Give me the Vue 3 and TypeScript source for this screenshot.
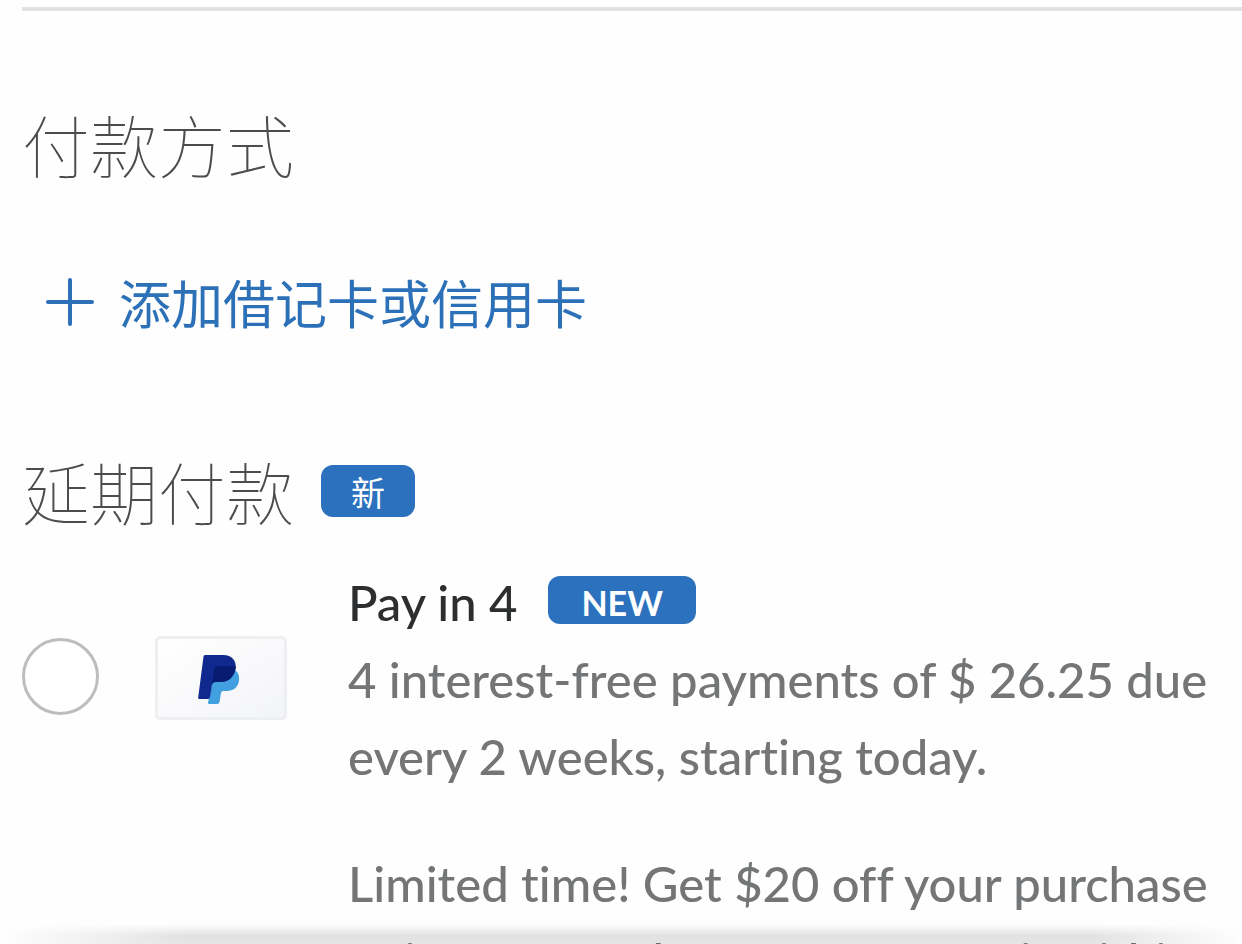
<script setup lang="ts">
import { ref } from 'vue'

const selected = ref<string>('')
</script>

<template>
  <main class="page">
    <hr class="rule" />

    <section class="methods">
      <h2 class="title">付款方式</h2>
      <button type="button" class="add">
        <svg class="plus" viewBox="0 0 48 48" aria-hidden="true">
          <path d="M24 2V46M2 24H46" />
        </svg>
        <span>添加借记卡或信用卡</span>
      </button>
    </section>

    <section class="later">
      <div class="heading">
        <h2 class="title">延期付款</h2>
        <span class="badge badge-cn">新</span>
      </div>

      <div class="option">
        <input id="pay-in-4" v-model="selected" class="radio" type="radio" name="funding" value="pay-in-4" />
        <svg class="card" viewBox="0 0 132 84" aria-hidden="true">
          <defs>
            <linearGradient id="cardFill" x1="0" y1="0" x2="1" y2="1">
              <stop offset="0" stop-color="#ffffff" />
              <stop offset="1" stop-color="#f3f4f7" />
            </linearGradient>
          </defs>
          <rect x="1.500" y="1.500" width="129" height="81" rx="4" fill="url(#cardFill)" stroke="#eeeff1" stroke-width="3" />
          <path fill="#429fe0" d="M60 34H80C84 37 85 42 83.500 47C81.500 53 77 55 71 55H68Q66.500 55 66 57L64.500 66Q64 68 62 68H54Q53 68 53 66.500Z" />
          <path fill="#10298e" d="M50 19H68C77 19 82 25 80.500 33C78.500 42 73 46 65 46H60Q57.500 46 57 48.500L55 61Q54.700 63 53 63H44Q43 63 43.200 61.500L48.500 20.500Q48.700 19 50 19Z" />
          <path fill="#071b70" d="M62 30H80.500Q81 31.500 80.500 33C78.500 42 73 46 65 46H60Q57.500 46 57 48.500L59.500 32Q60 30 62 30Z" />
        </svg>
        <label class="details" for="pay-in-4">
          <span class="name">Pay in 4 <span class="badge badge-en">NEW</span></span>
          <span class="terms">4 interest-free payments of $ 26.25 due every 2 weeks, starting today.</span>
          <span class="promo">Limited time! Get $20 off your purchase of in a store when you are new if within</span>
        </label>
      </div>
    </section>
    <div class="shade"></div>
  </main>
</template>

<style>
body {
  margin: 0;
  background: #fefefe;
}
</style>

<style scoped>
.page {
  position: relative;
  box-sizing: border-box;
  height: 100vh;
  overflow: hidden;
  padding: 7px 0 0 22px;
  background: #fefefe;
  color: #2c2e2f;
  font-family: Lato, "Noto Sans CJK SC", sans-serif;
}
.rule {
  height: 4px;
  margin: 0;
  border: 0;
  background: #e1e1e1;
}
.title {
  margin: 0;
  color: #4a4c4d;
  font-family: "Noto Sans CJK SC", sans-serif;
  font-size: 68px;
  line-height: 100px;
  font-weight: 100;
}
.methods {
  padding-top: 83px;
}
.add {
  display: flex;
  align-items: center;
  gap: 25px;
  margin: 70px 0 0 24px;
  padding: 0;
  border: 0;
  background: none;
  color: #2c71b8;
  font-family: "Noto Sans CJK SC", sans-serif;
  font-size: 52px;
  line-height: 76px;
  font-weight: 400;
}
.plus {
  width: 48px;
  height: 48px;
  fill: none;
  stroke: currentColor;
  stroke-width: 4;
  stroke-linecap: round;
}
.later {
  padding-top: 101px;
}
.heading {
  display: flex;
  align-items: center;
  gap: 27px;
}
.badge {
  display: inline-flex;
  align-items: center;
  justify-content: center;
  box-sizing: border-box;
  border-radius: 12px;
  background: #2b71bd;
  color: #fff;
  font-size: 34px;
}
.badge-cn {
  height: 52px;
  padding: 0 30px;
}
.badge-en {
  height: 48px;
  margin-top: 12px;
  padding: 4px 33px 0;
  font-weight: 700;
}
.option {
  display: flex;
  align-items: flex-start;
  padding-top: 23px;
}
.radio {
  flex: none;
  appearance: none;
  box-sizing: border-box;
  width: 77px;
  height: 77px;
  margin: 74px 56px 0 0;
  border: 3px solid #bdbdbd;
  border-radius: 50%;
  background: #fff;
}
.radio:checked {
  border: 22px solid #2b71bd;
}
.card {
  flex: none;
  width: 132px;
  height: 84px;
  margin: 72px 61px 0 0;
}
.details {
  flex: 1;
  font-size: 49px;
  line-height: 77px;
  font-weight: 500;
  font-variant-ligatures: none;
}
.name {
  display: flex;
  align-items: flex-start;
  gap: 31px;
}
.terms,
.promo {
  display: block;
  color: #737577;
}
.promo {
  margin-top: 50px;
}
.shade {
  position: absolute;
  right: 0;
  bottom: 0;
  left: 0;
  height: 20px;
  background: linear-gradient(rgba(0, 0, 0, 0), rgba(0, 0, 0, 0.11) 60%, rgba(0, 0, 0, 0.1));
  mask-image: linear-gradient(90deg, transparent, #000 15%, #000 88%, transparent);
}
</style>
